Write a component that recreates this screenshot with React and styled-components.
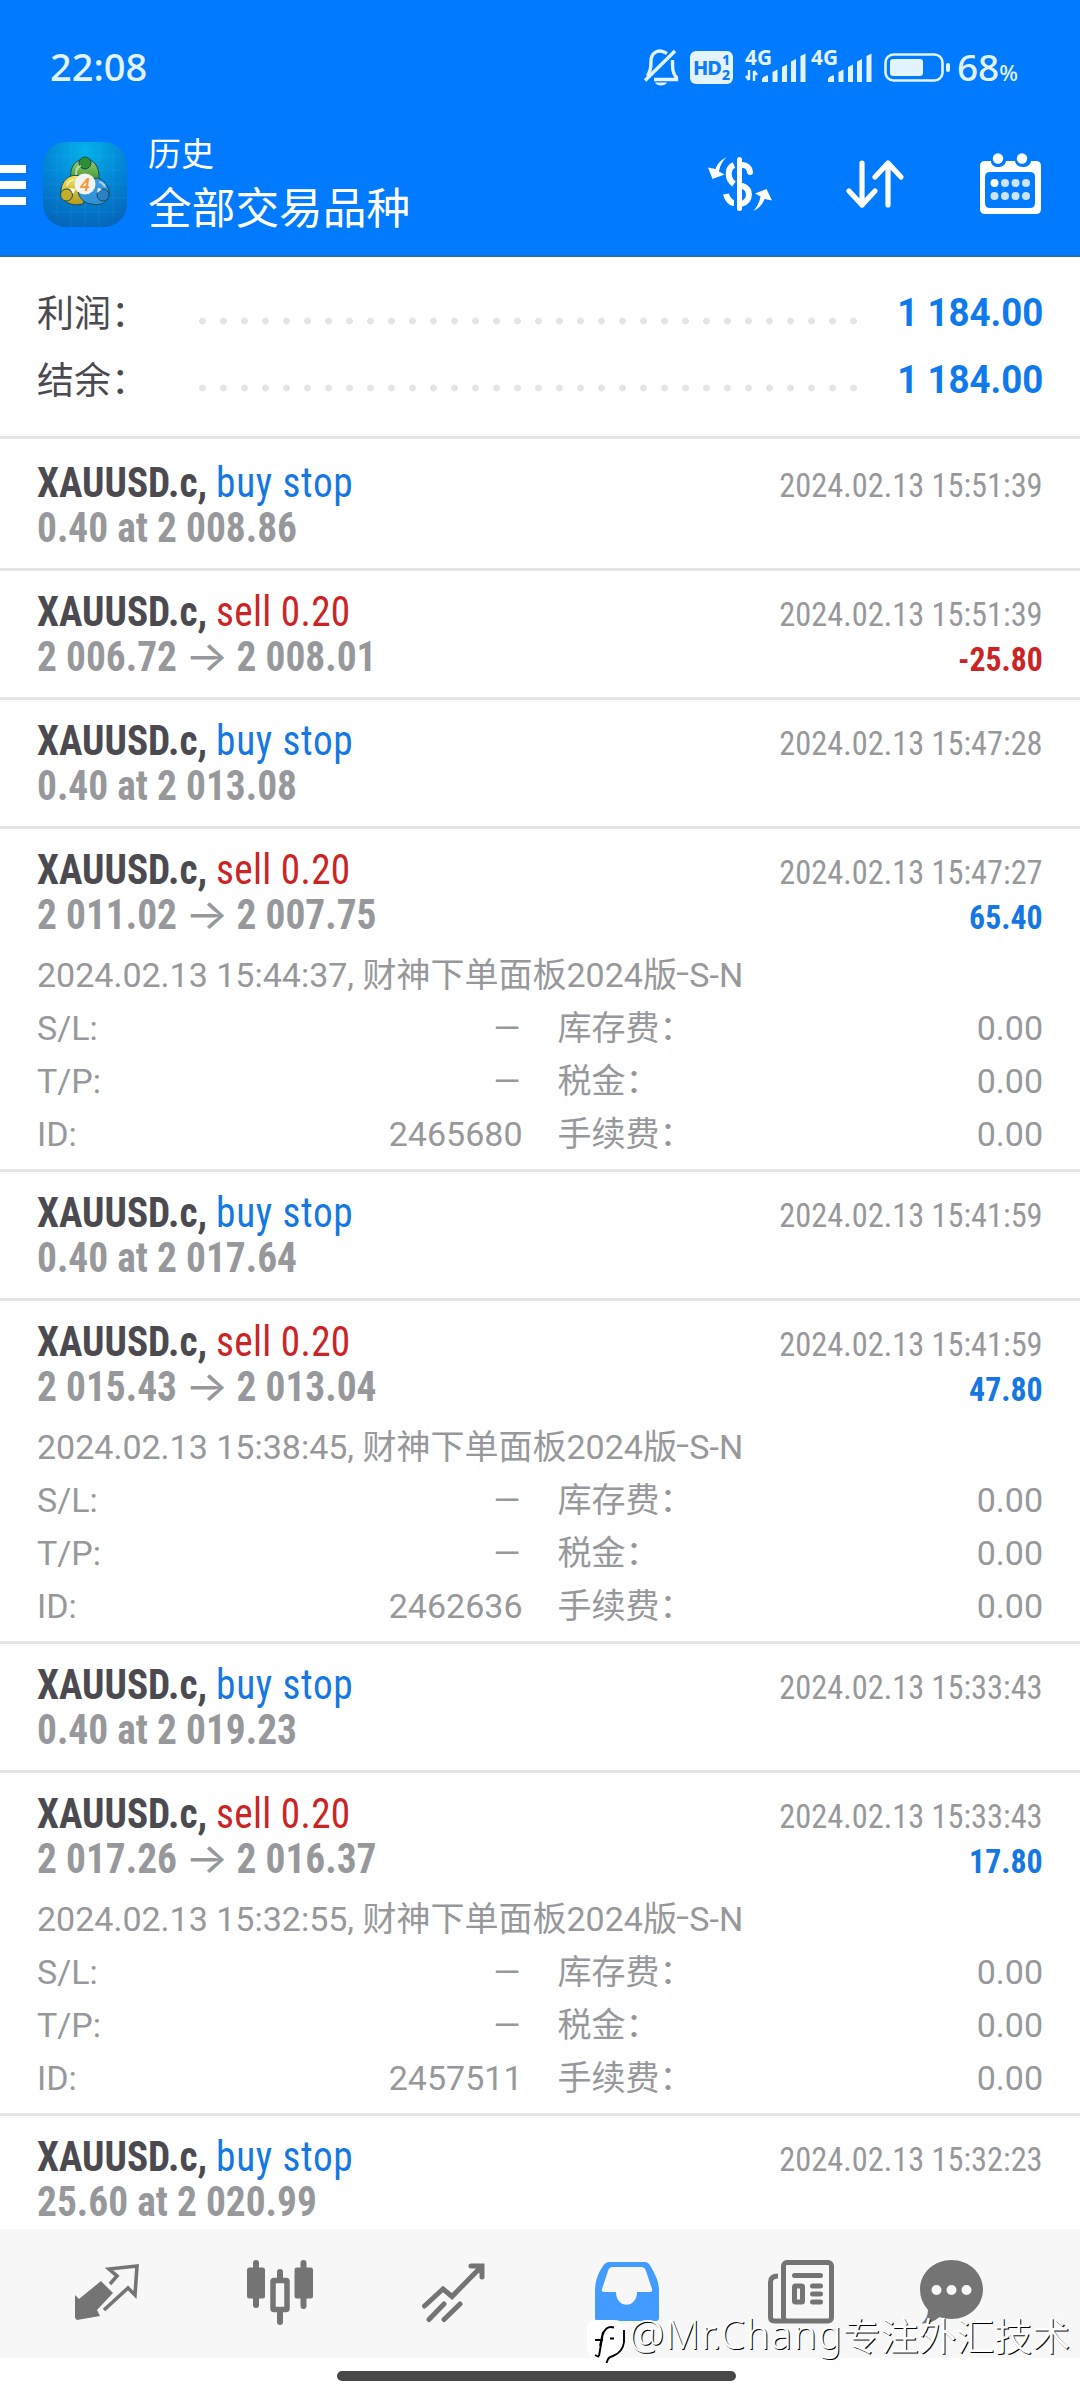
import React from 'react'
import { createGlobalStyle, styled } from 'styled-components';

const deals = [
  { action: 'buy stop', side: 'buy', price: ['0.40 at 2 008.86'], time: '2024.02.13 15:51:39' },
  { action: 'sell 0.20', side: 'sell', price: ['2 006.72', '2 008.01'], time: '2024.02.13 15:51:39', profit: '-25.80' },
  { action: 'buy stop', side: 'buy', price: ['0.40 at 2 013.08'], time: '2024.02.13 15:47:28' },
  { action: 'sell 0.20', side: 'sell', price: ['2 011.02', '2 007.75'], time: '2024.02.13 15:47:27', profit: '65.40', opened: '2024.02.13 15:44:37', id: '2465680' },
  { action: 'buy stop', side: 'buy', price: ['0.40 at 2 017.64'], time: '2024.02.13 15:41:59' },
  { action: 'sell 0.20', side: 'sell', price: ['2 015.43', '2 013.04'], time: '2024.02.13 15:41:59', profit: '47.80', opened: '2024.02.13 15:38:45', id: '2462636' },
  { action: 'buy stop', side: 'buy', price: ['0.40 at 2 019.23'], time: '2024.02.13 15:33:43' },
  { action: 'sell 0.20', side: 'sell', price: ['2 017.26', '2 016.37'], time: '2024.02.13 15:33:43', profit: '17.80', opened: '2024.02.13 15:32:55', id: '2457511' },
  { action: 'buy stop', side: 'buy', price: ['25.60 at 2 020.99'], time: '2024.02.13 15:32:23' },
];

function Signal({data}) {
  return (
    <svg width="61" height="34" viewBox="0 0 61 34" fill="#e3f3ff">
      <text x="0" y="15" fontFamily="Noto Sans" fontWeight="700" fontSize="21" textLength="27" lengthAdjust="spacingAndGlyphs">4G</text>
      {data && <path d="M4 20v10M1 26l3 4M9 31V21M12 25l-3-4" stroke="#e3f3ff" strokeWidth="2.4" fill="none" />}
      <path d="M17 29.500c0-2 3-4 6-4V32h-6zM27.500 22l5-2.500V32h-5zM37 17l5-2.500V32h-5zM46 11.500l5-2.500V32h-5zM55.500 6l5-2.500V32h-5z" />
    </svg>
  )
}

function StatusBar() {
  return (
    <Status>
      <Clock>22:08</Clock>
      <StatusIcons>
        <svg width="34" height="37" viewBox="0 0 34 37" fill="none" stroke="#e3f3ff" strokeWidth="3.4">
          <path d="M23 4.500C13-1.500 7 5 7 12c0 8-1 10-3.500 15M28.500 11c0 9 0 13 4 17.500v2H10" />
          <path d="M1 31.500L31 2" />
          <path d="M11 33.500h12c-1.500 4-10.500 4-12 0z" fill="#e3f3ff" stroke="none" />
        </svg>
        <HdBadge>HD<HdLines><span>1</span><span>2</span></HdLines></HdBadge>
        <Signals>
          <Signal data />
          <Signal />
        </Signals>
        <svg width="66" height="29" viewBox="0 0 66 29">
          <rect x="1.500" y="1.500" width="57" height="26" rx="8" fill="none" stroke="#e3f3ff" strokeWidth="2.600" />
          <rect x="6" y="6" width="33" height="17" rx="3" fill="#e3f3ff" />
          <rect x="62" y="10" width="4" height="9" rx="2" fill="#e3f3ff" />
        </svg>
        <Percent>68<small>%</small></Percent>
      </StatusIcons>
    </Status>
  )
}

function AppLogo() {
  return (
    <svg width="84" height="85" viewBox="0 0 84 85">
      <defs>
        <radialGradient id="bg" cx=".5" cy=".1" r="1">
          <stop offset="0" stopColor="#04b2ea" />
          <stop offset=".5" stopColor="#0384d4" />
          <stop offset="1" stopColor="#0560b4" />
        </radialGradient>
        <linearGradient id="green" x2="0" y2="1"><stop stopColor="#9bcf6a" /><stop offset="1" stopColor="#2c8a2a" /></linearGradient>
        <linearGradient id="yellow" x2="0" y2="1"><stop stopColor="#f0e460" /><stop offset="1" stopColor="#b59a1c" /></linearGradient>
        <linearGradient id="azure" x2="0" y2="1"><stop stopColor="#3aa0e0" /><stop offset="1" stopColor="#2f8fd6" /></linearGradient>
      </defs>
      <rect width="84" height="85" rx="23" fill="url(#bg)" />
      <path d="M14 10v65M28 0v85M42 0v85M56 0v85M70 10v65M8 14h68M0 28h84M0 42h84M0 56h84M8 70h68" stroke="#3fb4ea" strokeOpacity=".16" />
      <g stroke="#184a5c" strokeWidth="1">
        <path d="M28 36c-2-12 6-19 14-19s15 7 14 20l-4 6H34z" fill="url(#green)" />
        <path d="M36 34c-10-3-19 6-18 17 1 9 10 14 22 11l4-12z" fill="url(#yellow)" />
        <path d="M52 36c9 0 15 9 14 17-2 9-10 11-18 9-8-1-12-7-13-12l10 2z" fill="url(#azure)" />
        <circle cx="42" cy="21" r="6" fill="#2e8d35" />
        <circle cx="23.500" cy="53" r="6" fill="#c3ae2c" />
        <circle cx="60" cy="53" r="6" fill="#2b80c8" />
      </g>
      <path d="M33 33c0-6 2-9 5-9M24 44c1-4 3-6 7-6M62 45c-1-3-4-5-6-5" stroke="#fff" strokeOpacity=".55" strokeWidth="2" fill="none" />
      <path d="M27 46l6 1-3 5zM55 46l4 1-5 4z" fill="#fff" fillOpacity=".9" />
      <circle cx="42" cy="42" r="10.500" fill="#f3f3f3" />
      <text x="42" y="48.500" textAnchor="middle" fontFamily="Roboto" fontWeight="600" fontStyle="italic" fontSize="18" fill="#f59a3c">4</text>
    </svg>
  )
}

function Header() {
  return (
    <Toolbar>
      <MenuButton><i /><i /><i /></MenuButton>
      <AppLogo />
      <Titles>
        <small>历史</small>
        <h1>全部交易品种</h1>
      </Titles>
      <Actions>
        <svg width="64" height="54" viewBox="0 0 64 54" fill="none" stroke="#fff">
          <path d="M31.500 2.500v49" strokeWidth="5" strokeLinecap="round" />
          <path d="M26 8c-7 3-7 14 0 19M26 46c-3 0-7-4-8-9" strokeWidth="6" />
          <path d="M34.500 8c4 0 7 3 7.500 7M34.500 29c9 3 8 15 0 17.500" strokeWidth="6" strokeLinecap="round" />
          <path d="M18.500 0C13 3 9 7 7.500 12L0 10.500 4.500 22l12-4.500-5.500-3C12 9 14 5 18.500 0zM45.500 54c5.500-3 9.500-7 11-12l7.500 1.500L58.500 32 47 36.500l5.500 3c-1 5.500-3 9.500-7 14.500z" fill="#fff" stroke="none" />
        </svg>
        <svg width="58" height="48" viewBox="1 0 58 48" fill="none" stroke="#fff" strokeWidth="5.200" strokeLinecap="round" strokeLinejoin="round">
          <path d="M16 3v42M3 31l13 14 13-14M42 45V3M29 17L42 3l13 14" />
        </svg>
        <svg width="61" height="61" viewBox="0 0 61 61" fill="#fff">
          <path fillRule="evenodd" d="M5 8h6c0 8 14 8 15 0h9c1 8 15 8 16 0h5q5 0 5 5v43q0 5-5 5H5q-5 0-5-5V13q0-5 5-5zM10 19q-5 0-5 5v26q0 5 5 5h40q5 0 5-5V24q0-5-5-5z" />
          <circle cx="18" cy="5.500" r="5.200" /><circle cx="42" cy="5.500" r="5.200" />
          <circle cx="14.500" cy="30" r="4" />
          <g opacity=".8">
            <circle cx="25" cy="30" r="4" /><circle cx="35.500" cy="30" r="4" /><circle cx="46" cy="30" r="4" />
            <circle cx="14.500" cy="43" r="4" /><circle cx="25" cy="43" r="4" /><circle cx="35.500" cy="43" r="4" /><circle cx="46" cy="43" r="4" />
          </g>
        </svg>
      </Actions>
    </Toolbar>
  )
}

function Deal({deal}) {
  const [from, to] = deal.price;
  return (
    <DealRow>
      <Line>
        <Symbol>XAUUSD.c, <Action $side={deal.side}>{deal.action}</Action></Symbol>
        <Time>{deal.time}</Time>
      </Line>
      <Line>
        <Price>{from}{to && <> <Arrow>→</Arrow> {to}</>}</Price>
        {deal.profit && <Profit $loss={deal.profit.startsWith('-')}>{deal.profit}</Profit>}
      </Line>
      {deal.id && (
        <Details>
          <Comment>{deal.opened}, 财神下单面板2024版<Hyphen>-</Hyphen>S-N</Comment>
          <Field><span>S/L:</span><Dash>–</Dash></Field>
          <Field><span>库存费：</span><span>0.00</span></Field>
          <Field><span>T/P:</span><Dash>–</Dash></Field>
          <Field><span>税金：</span><span>0.00</span></Field>
          <Field><span>ID:</span><span>{deal.id}</span></Field>
          <Field><span>手续费：</span><span>0.00</span></Field>
        </Details>
      )}
    </DealRow>
  )
}

function TabBar() {
  return (
    <Tabs>
      <Tab>
        <svg width="64" height="56" viewBox="0 0 64 56">
          <path d="M26 17L38 29 22 46l3 6-23 4-2-2V31l4 4z" fill="#747474" />
          <path d="M35 20l7-8-8-7 28-3-2 29-7-7-24 22" fill="none" stroke="#747474" strokeWidth="3.600" />
        </svg>
      </Tab>
      <Tab>
        <svg width="66" height="65" viewBox="0 0 66 65" fill="#747474">
          <rect x="0" y="7.500" width="18" height="31" rx="2.500" /><rect x="6" y="0" width="6" height="48" rx="3" />
          <rect x="47.500" y="7.500" width="18.500" height="31" rx="2.500" /><rect x="53.500" y="0" width="6" height="49" rx="3" />
          <rect x="30" y="9" width="6" height="12" rx="3" /><rect x="30" y="48" width="6" height="17" rx="3" />
          <rect x="26" y="20.500" width="14" height="29" rx="1" fill="none" stroke="#747474" strokeWidth="5.500" />
        </svg>
      </Tab>
      <Tab>
        <svg width="63" height="59" viewBox="0 0 63 59" fill="none" stroke="#747474" strokeWidth="5" strokeLinecap="round">
          <path d="M2.500 43L21 26l9 7.500L59 4M49 3h11v11M7 56.500L22 41M22 56.500L38 41" />
        </svg>
      </Tab>
      <Tab>
        <svg width="64" height="60" viewBox="0 0 64 60">
          <path fillRule="evenodd" fill="#429bfe" d="M14 0h36c3 0 5 3 6 5 5 9 8 15 8 24v27q0 3-3 3H3q-3 0-3-3V29C0 20 3 11 8 4c2-3 4-4 6-4zM18 5c-3 0-4 1-5 4L7 27q-1 3 2 3h12c0 17 21 17 21 0h13q3 0 2-3L51 9c-1-3-2-4-5-4z" />
        </svg>
      </Tab>
      <Tab>
        <svg width="66" height="64" viewBox="0 0 66 64" fill="none" stroke="#747474">
          <rect x="15.500" y="2.500" width="48" height="58.500" rx="3.500" strokeWidth="5" />
          <path d="M10 16q-7.500 0-7.500 6v35q0 4 4 4H18" strokeWidth="5" />
          <path d="M26.500 15.500h26M44.500 26h8M44.500 34h8M44.500 42h8" strokeWidth="5" strokeLinecap="round" />
          <rect x="26.500" y="26" width="8" height="16" rx="1" strokeWidth="5" />
        </svg>
      </Tab>
      <Tab>
        <svg width="63" height="64" viewBox="0 0 63 64">
          <path d="M31.500 0C49 0 63 13 63 29.500S49 59 31.500 59q-7 0-12-2-8 7-18 6.500Q8 58 8 50 0 41 0 29.500C0 13 14 0 31.500 0z" fill="#747474" />
          <g fill="#f7f7f7"><circle cx="16.500" cy="30" r="5" /><circle cx="31.500" cy="30" r="5" /><circle cx="46.500" cy="30" r="5" /></g>
        </svg>
      </Tab>
    </Tabs>
  )
}

function App() {
  return (
    <Screen>
      <GlobalStyle />
      <TopBar>
        <StatusBar />
        <Header />
      </TopBar>
      <Summary>
        <SummaryRow><span>利润：</span><Dots /><b>1 184.00</b></SummaryRow>
        <SummaryRow><span>结余：</span><Dots /><b>1 184.00</b></SummaryRow>
      </Summary>
      <DealList>
        {deals.map((deal, i) => <Deal key={i} deal={deal} />)}
      </DealList>
      <TabBar />
      <GestureArea><Handle /></GestureArea>
      <Watermark>
        <svg width="38" height="44" viewBox="0 0 38 44">
          <path d="M10 0h18q10 0 10 10v18q-2 12-16 15l1-5H10Q0 38 0 28V10Q0 0 10 0z" fill="#fff" />
          <path d="M27 7.500c-6-2-10 2-11.500 8L12 36M8 20h8M23 18.500h4M16 12l-3 14M37 10v12c-1 9-6 12-11 14-4 1-5 2-6.500 7M8 35l4 2" fill="none" stroke="#000" strokeWidth="1.900" />
        </svg>
        <span>@Mr.Chang</span>专注外汇技术
      </Watermark>
    </Screen>
  )
}

export default App;

const GlobalStyle = createGlobalStyle`
body {
  margin: 0;
  background: #fff;
}
svg {
  display: block;
  flex-shrink: 0;
  overflow: visible;
}
`

const Screen = styled.div`
position: relative;
width: 1080px;
height: 2400px;
overflow: hidden;
display: flex;
flex-direction: column;
font-family: Roboto, "Noto Sans CJK SC", sans-serif;
color: #97989b;
`

const TopBar = styled.header`
height: 255px;
flex-shrink: 0;
background: #007aff;
border-bottom: 2px solid #1b6ec4;
color: #fff;
`

const Status = styled.div`
display: flex;
align-items: center;
justify-content: space-between;
height: 134px;
padding: 0 62px 0 50px;
box-sizing: border-box;
color: #e3f3ff;
`

const Clock = styled.div`
font: 500 38px/40px "Noto Sans", sans-serif;
padding-bottom: 2px;
`

const StatusIcons = styled.div`
display: flex;
align-items: center;
gap: 12px;
`

const HdBadge = styled.div`
display: flex;
align-items: center;
width: 43px;
height: 33px;
padding-left: 3px;
box-sizing: border-box;
border-radius: 6px;
background: #e3f3ff;
color: #0b7cff;
font: 800 20px/33px "Noto Sans", sans-serif;
letter-spacing: -1px;
`

const HdLines = styled.div`
display: flex;
flex-direction: column;
padding-left: 1px;
font-size: 14px;
line-height: 15px;
`

const Signals = styled.div`
display: flex;
gap: 5px;
`

const Percent = styled.div`
display: flex;
align-items: baseline;
height: 40px;
margin-left: -5px;
font: 500 37px/40px "Noto Sans", sans-serif;
small {
  font-size: 22px;
}
`

const Toolbar = styled.div`
display: flex;
align-items: center;
height: 101px;
`

const MenuButton = styled.div`
display: flex;
flex-direction: column;
gap: 8px;
width: 43px;
i {
  width: 26px;
  height: 8px;
  background: #fff;
}
`

const Titles = styled.div`
margin-left: 21px;
font-family: "Noto Sans CJK SC", sans-serif;
small {
  display: block;
  font-size: 33px;
  line-height: 40px;
}
h1 {
  margin: 0;
  font-size: 43.700px;
  font-weight: 400;
  line-height: 66px;
}
`

const Actions = styled.div`
display: flex;
align-items: center;
gap: 75px;
margin-left: auto;
padding: 0 39px 2px 0;
`

const Summary = styled.section`
height: 182px;
padding-top: 22px;
box-sizing: border-box;
border-bottom: 3px solid #e4e4e4;
flex-shrink: 0;
margin-bottom: 3px;
`

const SummaryRow = styled.div`
display: flex;
align-items: center;
height: 67px;
padding: 0 37px;
font-size: 37px;
color: #4b4a50;
span {
  width: 155px;
  padding-bottom: 4px;
}
b {
  margin-left: auto;
  color: #0f7aec;
  font-size: 38px;
  transform: scaleX(.965);
  transform-origin: right;
}
`

const Dots = styled.div`
width: 672px;
height: 8px;
margin-top: 16px;
background: radial-gradient(circle at 10.500px 4px, #e4e4e4 3px, transparent 3.800px) 0 0 / 21px 8px;
`

const DealList = styled.main`
height: 1787px;
flex-shrink: 0;
overflow: hidden;
`

const DealRow = styled.article`
padding: 18px 37px 18px;
border-bottom: 3px solid #e4e4e4;
`

const Line = styled.div`
display: flex;
align-items: baseline;
justify-content: space-between;
height: 45px;
line-height: 45px;
font-family: "Roboto Condensed", Roboto, sans-serif;
font-stretch: 75%;
font-size: 42px;
white-space: pre;
`

const Symbol = styled.div`
font-weight: 700;
color: #4b4a50;
transform: scaleX(.935);
transform-origin: left;
`

const Action = styled.span`
font-weight: 400;
letter-spacing: ${({$side}) => $side === 'sell' ? '.3px' : '.7px'};
color: ${({$side}) => $side === 'sell' ? '#cb2426' : '#1477e2'};
`

const Price = styled.div`
font-weight: 700;
transform: scaleX(.938);
transform-origin: left;
`

const Arrow = styled.span`
display: inline-block;
margin: 0 2px;
font-family: Inter, sans-serif;
font-size: 42px;
font-weight: 400;
line-height: 1;
height: 42px;
transform: scaleX(1.16);
`

const Time = styled.div`
font-size: 34px;
transform: scaleX(.952);
transform-origin: right;
`

const Profit = styled.div`
font-size: 34px;
font-weight: 700;
color: ${({$loss}) => $loss ? '#cb2426' : '#1477e2'};
transform: scaleX(.935);
transform-origin: right;
`

const Details = styled.div`
display: grid;
grid-template-columns: 1fr 1fr;
column-gap: 35px;
padding-top: 12px;
margin-bottom: -10px;
font-size: 34px;
line-height: 53px;
`

const Comment = styled.div`
grid-column: 1 / 3;
height: 53px;
`

const Hyphen = styled.span`
display: inline-block;
margin: 0 2px 0 1px;
transform: translateY(-3px) scaleX(1.35);
`

const Field = styled.div`
display: flex;
justify-content: space-between;
height: 53px;
`

const Dash = styled.span`
transform: scaleX(1.35);
transform-origin: right;
`

const Tabs = styled.nav`
display: flex;
align-items: center;
height: 129px;
padding: 0 0 3px 20px;
box-sizing: border-box;
flex-shrink: 0;
background: #f7f7f7;
`

const Tab = styled.div`
display: flex;
justify-content: center;
width: 173.500px;
&:last-child {
  width: 127px;
}
`

const GestureArea = styled.div`
display: flex;
justify-content: center;
padding: 13px 7px 0 0;
`

const Handle = styled.div`
width: 399px;
height: 10px;
border-radius: 5px;
background: #474747;
`

const Watermark = styled.div`
position: absolute;
left: 587px;
top: 2304px;
display: flex;
align-items: center;
font: 350 37.900px/54px "Noto Sans CJK SC", sans-serif;
color: #fff;
text-shadow: 1px 1px 0 #000;
white-space: nowrap;
svg {
  margin: 16px 4px 0 0;
}
span {
  font-family: "Noto Sans", sans-serif;
  font-weight: 300;
  font-size: 39.500px;
  letter-spacing: 1.200px;
}
`
